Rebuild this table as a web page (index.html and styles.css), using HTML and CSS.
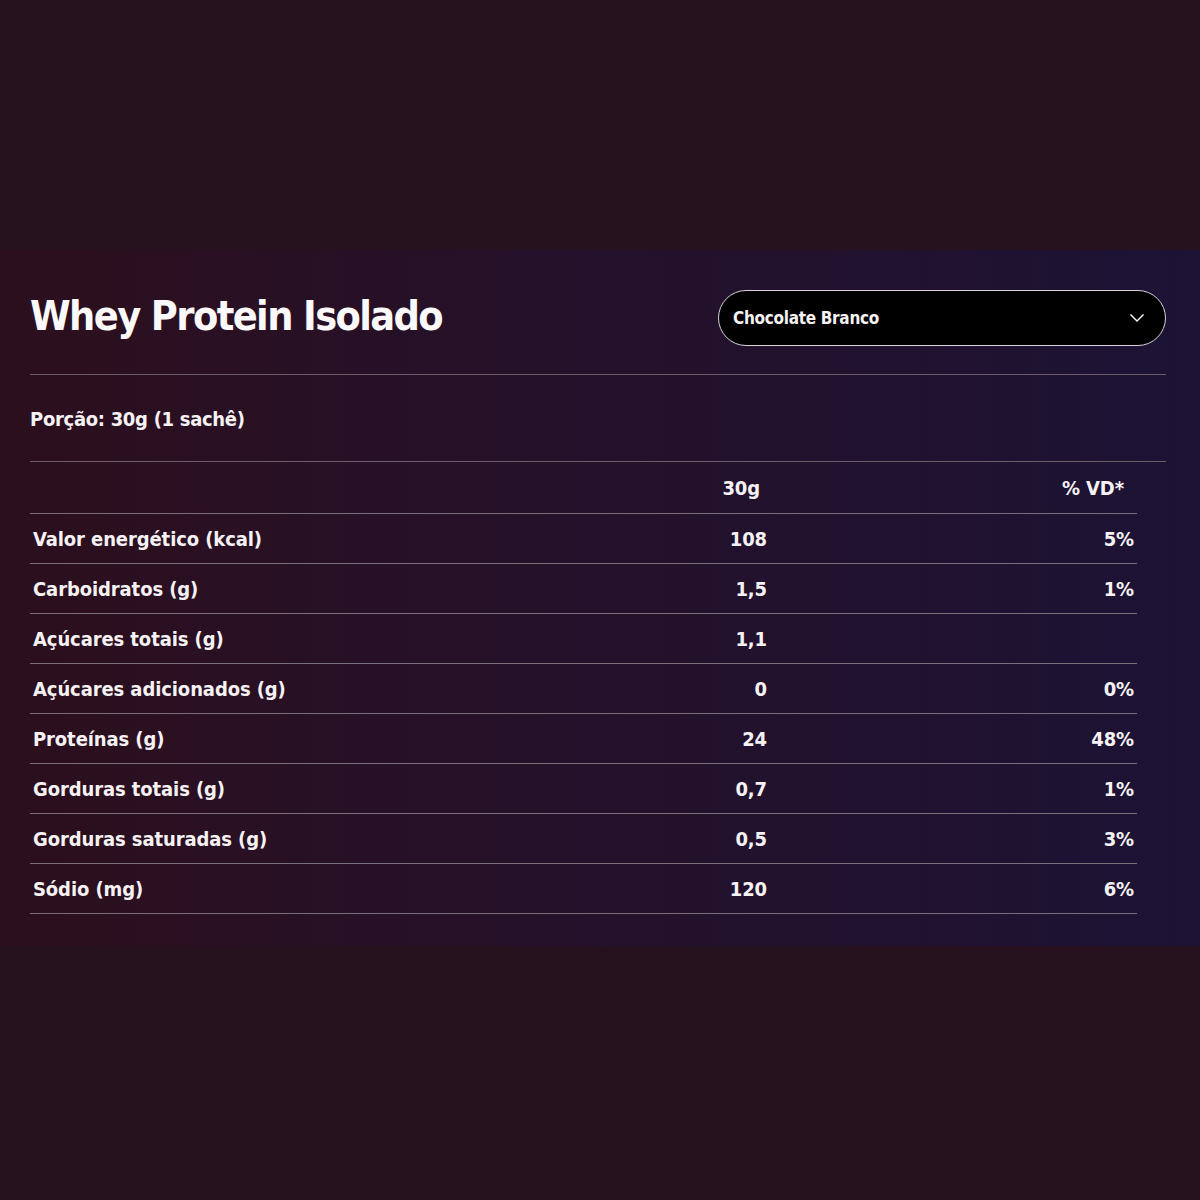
FILE: index.html
```html
<!DOCTYPE html>
<html lang="pt-BR">
<head>
    <meta charset="UTF-8">
    <meta name="viewport" content="width=device-width, initial-scale=1.0">
    <title>Tabela Nutricional</title>
    <link rel="stylesheet" href="styles.css">
</head>
<body>
    <div class="top-space"></div>
    <section class="nutrition">
        <div class="nutrition-header">
            <h1 class="product-title">Whey Protein Isolado</h1>
            <div class="flavor-select">
                <span>Chocolate Branco</span>
                <svg class="chevron" width="16" height="10" viewBox="0 0 16 10">
                    <path d="M1.5 1.5 L8 8 L14.5 1.5" fill="none" stroke="#fff" stroke-width="1.4"/>
                </svg>
            </div>
        </div>
        <div class="portion">Porção: 30g (1 sachê)</div>
        <table class="nutrition-table">
            <thead>
                <tr>
                    <th></th>
                    <th class="num">30g</th>
                    <th class="vd">% VD*</th>
                </tr>
            </thead>
            <tbody>
                <tr><td>Valor energético (kcal)</td><td class="num">108</td><td class="vd">5%</td></tr>
                <tr><td>Carboidratos (g)</td><td class="num">1,5</td><td class="vd">1%</td></tr>
                <tr><td>Açúcares totais (g)</td><td class="num">1,1</td><td class="vd"></td></tr>
                <tr><td>Açúcares adicionados (g)</td><td class="num">0</td><td class="vd">0%</td></tr>
                <tr><td>Proteínas (g)</td><td class="num">24</td><td class="vd">48%</td></tr>
                <tr><td>Gorduras totais (g)</td><td class="num">0,7</td><td class="vd">1%</td></tr>
                <tr><td>Gorduras saturadas (g)</td><td class="num">0,5</td><td class="vd">3%</td></tr>
                <tr><td>Sódio (mg)</td><td class="num">120</td><td class="vd">6%</td></tr>
            </tbody>
        </table>
    </section>
</body>
</html>
```

FILE: styles.css
```css
body {
    margin: 0;
    padding: 0;
    background-color: #26121f;
    color: #f6f2f4;
    font-family: "DejaVu Sans", sans-serif;
    font-stretch: condensed;
    min-height: 1200px;
}
.top-space {
    height: 250px;
}
.nutrition {
    padding: 40px 34px 32px 30px;
    background: linear-gradient(90deg, #2c0f1d 0%, #25112a 45%, #201230 80%, #1c1335 100%);
}
.nutrition-header {
    display: flex;
    justify-content: space-between;
    align-items: center;
    padding-bottom: 28px;
    border-bottom: 1px solid #6c5d69;
}
.product-title {
    margin: 0 0 4px;
    font-size: 41px;
    font-weight: bold;
    letter-spacing: -1.6px;
    color: #fbf8fa;
}
.flavor-select {
    box-sizing: border-box;
    width: 448px;
    height: 56px;
    display: flex;
    align-items: center;
    justify-content: space-between;
    padding: 0 20px 0 14px;
    background-color: #000;
    border: 1px solid #d8d4d8;
    border-radius: 28px;
    font-size: 17px;
    font-weight: bold;
    letter-spacing: -0.3px;
}
.chevron {
    display: block;
}
.portion {
    padding: 32px 0 30px;
    font-size: 20px;
    font-weight: bold;
    letter-spacing: -0.3px;
    border-bottom: 1px solid #6c5d69;
}
.nutrition-table {
    width: 1107px;
    border-collapse: collapse;
    font-size: 20px;
    font-weight: bold;
    letter-spacing: -0.1px;
}
.nutrition-table th,
.nutrition-table td {
    height: 49px;
    padding: 0 3px;
    border-bottom: 1px solid #7a6e7b;
}
.nutrition-table th {
    height: 51px;
    font-weight: bold;
}
.nutrition-table .num {
    text-align: right;
    width: 120px;
}
.nutrition-table .vd {
    text-align: right;
    width: 351px;
}
.nutrition-table th.num {
    padding-right: 10px;
}
.nutrition-table th.vd {
    padding-right: 13px;
}
```
